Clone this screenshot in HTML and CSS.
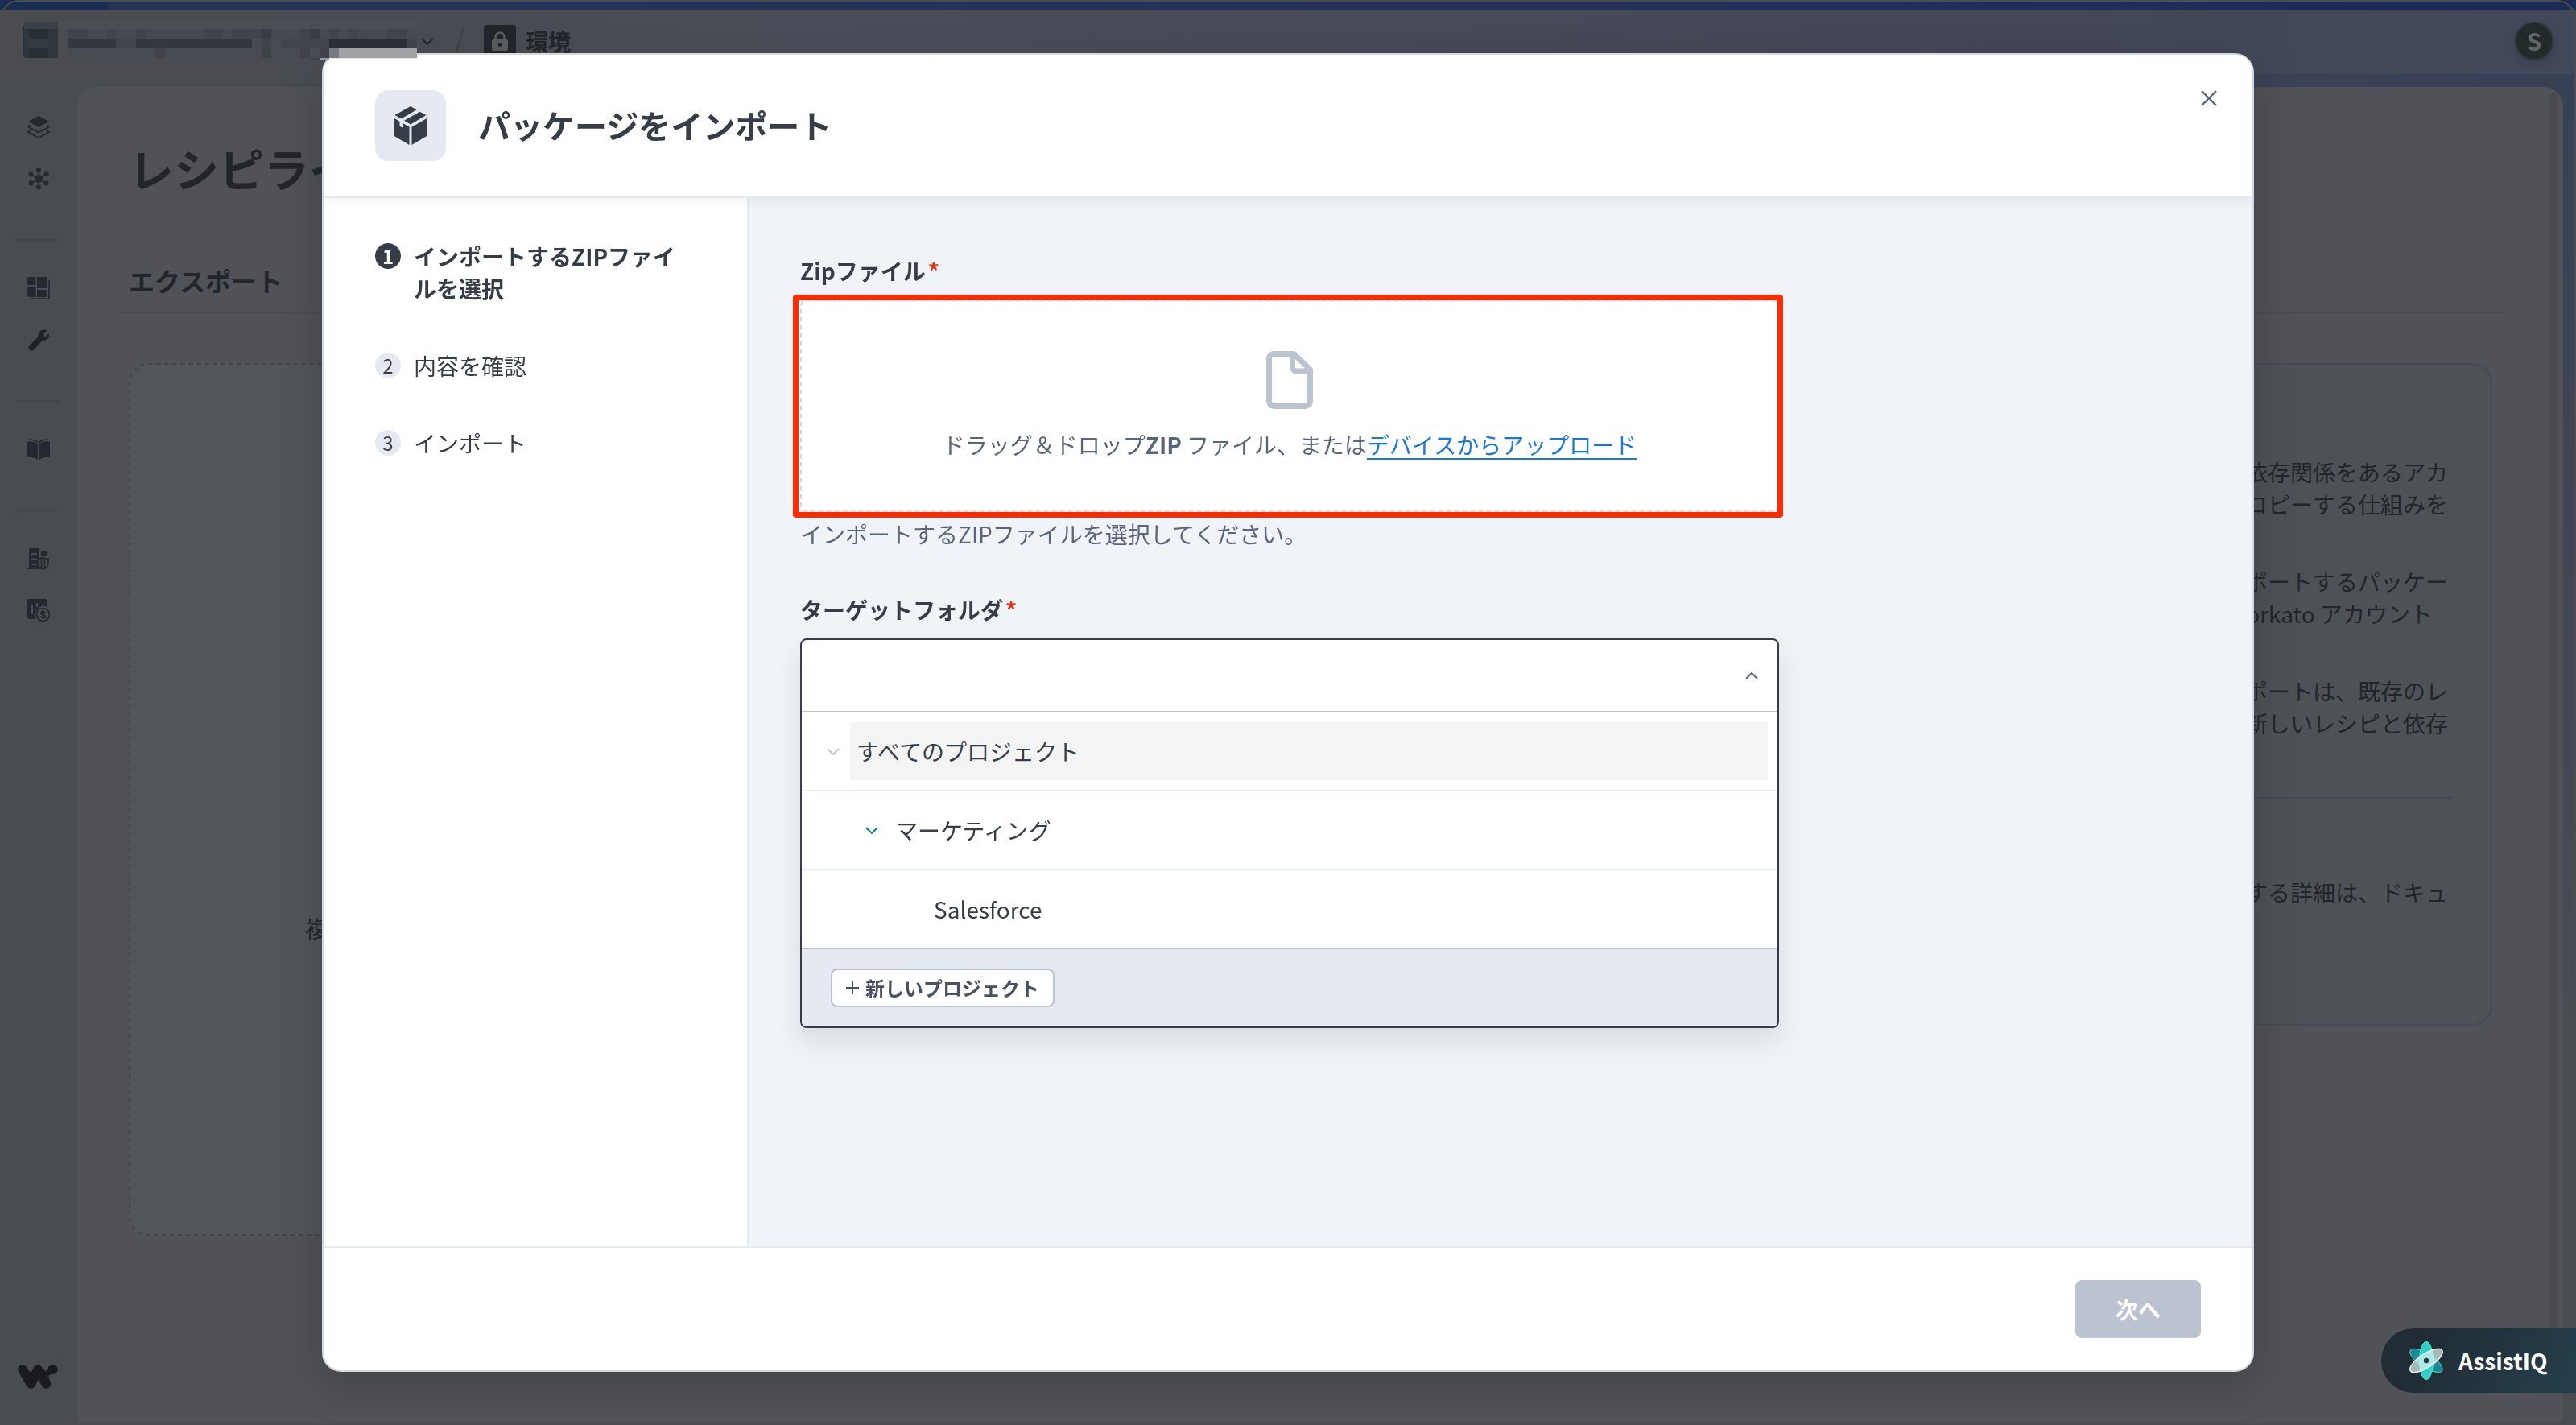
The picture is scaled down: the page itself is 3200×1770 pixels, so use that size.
FILE: index.html
```html
<!DOCTYPE html>
<html lang="ja">
<head>
  <meta charset="UTF-8" />
  <title>パッケージをインポート</title>
  <link rel="stylesheet" href="styles.css">
</head>
<body>

  <div class="app">
    <div class="top-strip"></div>

    <header class="topbar">
      <svg class="chevron-env" width="16" height="9" viewBox="0 0 16 9"><path d="M1 1l7 7 7-7"/></svg>
      <svg class="slash" width="12" height="36" viewBox="0 0 12 36"><path d="M11 1L1 35"/></svg>
      <span class="lock">
        <svg width="20" height="24" viewBox="0 0 20 24">
          <path d="M4.500 11V7a5.500 5.500 0 0 1 11 0v4" fill="none" stroke="#5b5e5f" stroke-width="2.500"/>
          <path fill-rule="evenodd" fill="#5b5e5f" d="M2 10h16a2 2 0 0 1 2 2v10a2 2 0 0 1-2 2H2a2 2 0 0 1-2-2V12a2 2 0 0 1 2-2zm8 4.500a2.300 2.300 0 1 0 0 4.600 2.300 2.300 0 0 0 0-4.600z"/>
        </svg>
      </span>
      <span class="env-name">環境</span>
      <span class="avatar">S</span>
    </header>

    <div class="workspace">
      <nav class="sidebar">
        <div class="nav-group">
          <span class="nav-item">
            <svg width="28" height="28" viewBox="0 0 28 28">
              <path class="fill" d="M14 0l13 7-13 7L1 7z"/>
              <path class="line" d="M3.500 11.500L1 13.500l13 7 13-7-2.500-2M3.500 18L1 20l13 7 13-7-2.500-2"/>
            </svg>
          </span>
          <span class="nav-item">
            <svg width="28" height="28" viewBox="0 0 28 28">
              <path class="line" d="M14 3v22M4.500 8.500l19 11M23.500 8.500l-19 11"/>
              <g class="fill">
                <circle cx="14" cy="14" r="5"/>
                <circle cx="14" cy="3.500" r="3"/><circle cx="14" cy="24.500" r="3"/>
                <circle cx="4.500" cy="8.500" r="3"/><circle cx="23.500" cy="8.500" r="3"/>
                <circle cx="4.500" cy="19.500" r="3"/><circle cx="23.500" cy="19.500" r="3"/>
              </g>
            </svg>
          </span>
        </div>
        <div class="nav-group">
          <span class="nav-item">
            <svg width="28" height="28" viewBox="0 0 28 28">
              <path class="fill" d="M2 0h8.500v10H0V2a2 2 0 0 1 2-2zM12 0h11a2 2 0 0 1 2 2v12H12zM0 12h10.500v13H2a2 2 0 0 1-2-2zM12 16h13v7a2 2 0 0 1-2 2H12z"/>
              <path class="line" d="M27 4v23H4"/>
            </svg>
          </span>
          <span class="nav-item">
            <svg width="28" height="28" viewBox="0 0 28 28">
              <path fill="#1e2126" d="M24.500 2.500l-4.600 4.600.8 2.400 2.400.4 3.800-3.900c1.200 5-2.600 9.700-8 8.500L9 25.500a3.800 3.800 0 0 1-6.700-3.800c.2-.5.500-.8 1-1.200L13.500 10.300C12.300 4.300 18.500-.9 24.500 2.500z"/>
            </svg>
          </span>
        </div>
        <div class="nav-group">
          <span class="nav-item">
            <svg width="28" height="28" viewBox="0 0 28 28">
              <path class="fill" d="M0 4.500c5-.8 9.500-.3 13 2.700V27c-4-2.800-8-3.600-13-3.300zM28 4.500c-5-.8-9.500-.3-13 2.700V27c4-2.800 8-3.600 13-3.300z"/>
              <path class="line" d="M2 2c4.500.1 8.500 1 12 3.800C17.500 3 21.500 2.100 26 2"/>
            </svg>
          </span>
        </div>
        <div class="nav-group">
          <span class="nav-item">
            <svg width="28" height="28" viewBox="0 0 28 28">
              <path class="fill" d="M4 1h9a2 2 0 0 1 2 2v8c-3 3-3 10 0 14v2H0v-2h2V3a2 2 0 0 1 2-2zM17 5h6a2 2 0 0 1 2 2v4l-5-1.500-3 1.500z"/>
              <path class="gap" d="M5 8h7M5 14.500h7M5 21h7"/>
              <path class="line" d="M19.500 12.500l6.500 2v5c0 4-3 6-6.500 7.500-3.500-1.500-6.500-3.500-6.500-7.500v-5zM17.500 13v12M21.500 13v12"/>
            </svg>
          </span>
          <span class="nav-item">
            <svg width="28" height="28" viewBox="0 0 28 28">
              <path class="fill" d="M2 0h21a2 2 0 0 1 2 2v7.500C16 6 8 14 10.500 25H2a2 2 0 0 1-2-2V2a2 2 0 0 1 2-2z"/>
              <path class="gap" d="M6 8v11M12 5v5M19 7v2"/>
              <circle class="line" cx="19.500" cy="19.500" r="8"/>
              <path class="line" d="M22.300 17c-.6-1.600-5.600-1.800-5.600.7 0 2.800 5.800 1.200 5.800 4 0 2.500-5.200 2.300-6-.2M19.500 13.800v11.400"/>
            </svg>
          </span>
        </div>
        <svg class="brand-mark" width="50" height="30" viewBox="0 0 50 30">
          <path d="M6 6l10.500 18L25 6l10.500 18L31 14l13-8" fill="none" stroke="#1a1b1e" stroke-width="11.500" stroke-linecap="round" stroke-linejoin="round"/>
          <path d="M14 8c3 2 4 1 6-2v12h-8zM30 6c3 3 5 4 8 1v6l-8 4z" fill="#1a1b1e"/>
          <path d="M13 0h7l-3.500 8.500zM31.500 0h6.500v5l-3 3.500-3-3.500zM38.500 13.500c3-2 5-2 11.500-1.500v3.500H38.500z" fill="#494c51"/>
        </svg>
      </nav>

      <main class="page">
        <h1 class="page-title">レシピライ</h1>
        <div class="tabs"><span class="tab">エクスポート</span></div>
        <div class="cards">
          <section class="export-card"><p class="export-text">複</p></section>
          <section class="info-card">
            <p>依存関係をあるアカ<br>コピーする仕組みを</p>
            <p>ポートするパッケー<br><span class="short-line">Workato アカウント</span></p>
            <p>ポートは、既存のレ<br>新しいレシピと依存</p>
            <p class="info-docs">する詳細は、ドキュ</p>
          </section>
        </div>
        <span class="scrollbar"></span>
      </main>
    </div>
  </div>

  <div class="overlay">
    <section class="modal">
      <header class="modal-header">
        <span class="modal-icon">
          <svg width="42" height="48" viewBox="0 0 42 48">
            <g fill="#373d47">
              <path d="M21 0l7.500 4.300L9.500 15.500 1.500 11z"/>
              <path d="M32.500 6.700L40.500 11 21 22.500l-8-4.700z"/>
              <path d="M0 14.500l7.500 4.300v6l3.500 1.700v-5.700l8.500 4.900V48L0 36.500z"/>
              <path d="M42 14.500v22L22.500 48V25.700z"/>
            </g>
          </svg>
        </span>
        <h2 class="modal-title">パッケージをインポート</h2>
        <svg class="close" width="20" height="20" viewBox="0 0 20 20"><path d="M1 1l18 18M19 1L1 19"/></svg>
      </header>

      <div class="modal-body">
        <ol class="steps">
          <li class="step active"><span class="step-no">1</span><span class="step-text">インポートするZIPファイルを選択</span></li>
          <li class="step"><span class="step-no">2</span><span class="step-text">内容を確認</span></li>
          <li class="step"><span class="step-no">3</span><span class="step-text">インポート</span></li>
        </ol>

        <div class="form">
          <label class="label">Zipファイル<span class="required">*</span></label>
          <div class="dropzone">
            <svg width="58" height="72" viewBox="0 0 58 72">
              <path d="M10 3.500h24L54.500 23v39.500a6 6 0 0 1-6 6H9.500a6 6 0 0 1-6-6v-53a6 6 0 0 1 6-6zM32.500 4v16a5 5 0 0 0 5 5h17"/>
            </svg>
            <p>ドラッグ＆ドロップ<b>ZIP</b> ファイル、または<a class="upload">デバイスからアップロード</a></p>
            <span class="highlight"></span>
          </div>
          <p class="help">インポートするZIPファイルを選択してください。</p>

          <label class="label">ターゲットフォルダ<span class="required">*</span></label>
          <div class="select">
            <div class="select-value">
              <svg width="16" height="9" viewBox="0 0 16 9"><path d="M1 8l7-7 7 7"/></svg>
            </div>
            <ul class="tree">
              <li class="tree-row level-0">
                <svg width="16" height="9" viewBox="0 0 16 9"><path d="M1 1l7 7 7-7"/></svg>
                <span class="tree-name">すべてのプロジェクト</span>
              </li>
              <li class="tree-row level-1">
                <svg width="16" height="9" viewBox="0 0 16 9"><path d="M1 1l7 7 7-7"/></svg>
                <span class="tree-name">マーケティング</span>
              </li>
              <li class="tree-row level-2"><span class="tree-name">Salesforce</span></li>
            </ul>
            <div class="select-footer">
              <button class="new-project">
                <svg width="16" height="16" viewBox="0 0 16 16"><path d="M8 0v16M0 8h16"/></svg>
                新しいプロジェクト
              </button>
            </div>
          </div>
        </div>
      </div>

      <footer class="modal-footer">
        <button class="next" disabled>次へ</button>
      </footer>
    </section>
  </div>

  <!-- obscured workspace name -->
  <svg class="workspace-name" width="490" height="48" viewBox="28 27 490 48">
    <rect x="28" y="31" width="8" height="40" rx="4" fill="#263038"/>
    <path fill="#3c4049" d="M30 27h42v9H30z"/>
    <path fill="#2f363d" d="M30 36h42v36H30z"/>
    <path fill="#272f36" d="M36 36h24v12H36zM36 60h24v12H36z"/>
    <path fill="#353b42" d="M36 48h24v12H36z"/>
    <path fill="#4b4e54" d="M72 27h446v9H72z"/>
    <path fill="#464951" d="M84 36h434v12H84z"/>
    <path fill="#41444b" d="M84 36h24v12H84zM133 36h12v12h-12zM169 36h12v12h-12zM253 36h24v12h-24zM289 36h36v12h-36zM373 36h24v12h-24zM409 36h12v12h-12zM433 36h12v12h-12zM481 36h24v12h-24z"/>
    <path fill="#3a3d43" d="M325 36h12v12h-12zM385 36h12v12h-12z"/>
    <path fill="#40444b" d="M84 48h434v12H84z"/>
    <path fill="#35373e" d="M84 48h60v12H84zM169 48h144v12H169z"/>
    <path fill="#464a52" d="M313 48h12v12h-12zM337 48h12v12h-12z"/>
    <path fill="#2b2e36" d="M409 48h96v12h-96z"/>
    <path fill="#474a50" d="M84 60h312v12H84z"/>
    <path fill="#404248" d="M193 60h12v12h-12zM325 60h12v12h-12zM373 60h12v12h-12zM397 60h12v14h-24v-2h12z"/>
    <path fill="#777a83" d="M409 60h12v12h-12z"/>
    <path fill="#a0a2a7" d="M421 60h97v12h-97z"/>
    <path fill="#e6e7ea" d="M409 72h109v1H409z"/>
    <path fill="#9a9ca2" d="M397 72h12v2h-12z"/>
  </svg>

  <div class="assist">
    <svg width="48" height="52" viewBox="-24 -26 48 52">
      <ellipse rx="8.500" ry="23.500" transform="rotate(-57)" fill="#1b8a95" stroke="#3fd0c9"/>
      <ellipse rx="8.500" ry="23.500" fill="#2fcfc6" stroke="#5fe8da"/>
      <ellipse rx="8.500" ry="23.500" transform="rotate(57)" fill="#dff5f2" fill-opacity=".7" stroke="#e4f3f2" stroke-width="1.500"/>
      <circle r="3.200" fill="#24363f"/>
    </svg>
    <span>AssistIQ</span>
  </div>

</body>
</html>
```
FILE: styles.css
```css
* {
  box-sizing: border-box;
}

body {
  margin: 0;
  height: 1770px;
  overflow: hidden;
  font-family: 'Noto Sans CJK JP', sans-serif;
  font-size: 28px;
  line-height: 40px;
  color: #373d47;
}

h1, h2, p, ol, ul {
  margin: 0;
  padding: 0;
  list-style: none;
}

button {
  font-family: inherit;
}

svg {
  display: block;
  flex: none;
}

/* page behind the dialog */
.app {
  position: relative;
  display: flex;
  flex-direction: column;
  height: 1770px;
  background: radial-gradient(ellipse 2600px 1200px at 100% 92px, #384056, #494c51);
  color: #22252a;
}

/* window edge */
.app::after {
  content: '';
  position: absolute;
  inset: 0;
  border: 2px solid #4a4c50;
  border-radius: 24px;
}

.top-strip {
  height: 12px;
  background: linear-gradient(75deg, #1c2d55 131px, #253354 132px, #24325a 60%, #1b2c54 92%);
}

.topbar {
  display: flex;
  align-items: center;
  height: 80px;
  padding: 0 28px 2px 523px;
  background: linear-gradient(90deg, #4a4c50, #4a4c57 32%, #434756 80%, #404859);
}

.chevron-env path {
  fill: none;
  stroke: #22252a;
  stroke-width: 2;
}

.slash {
  margin: 0 24px 0 26px;
}

.slash path {
  stroke: #3c4047;
  stroke-width: 2;
}

.lock {
  display: flex;
  align-items: center;
  justify-content: center;
  width: 40px;
  height: 40px;
  border-radius: 4px;
  background: #22252a;
}

.env-name {
  margin-left: 12px;
  font-weight: 700;
}

.avatar {
  width: 48px;
  height: 48px;
  margin-left: auto;
  border: 2px solid #2c3837;
  border-radius: 50%;
  background: #222b29;
  box-shadow: 0 4px 10px rgba(0, 0, 0, 0.15);
  color: #60656a;
  font-size: 30px;
  font-weight: 700;
  line-height: 43px;
  text-align: center;
}

.workspace {
  display: flex;
  flex: 1;
  padding-bottom: 2px;
  padding-right: 16px;
}

.sidebar {
  display: flex;
  flex-direction: column;
  width: 96px;
  padding-top: 34px;
  padding-bottom: 43px;
  background: #494c51;
}

.nav-group + .nav-group {
  padding-top: 72px;
  background: linear-gradient(#42454a, #42454a) 20px 43px / 54px 2px no-repeat;
}

.nav-item {
  display: flex;
  align-items: center;
  justify-content: center;
  height: 64px;
}

.fill {
  fill: #25292f;
}

.line {
  fill: none;
  stroke: #25292f;
  stroke-width: 1.7;
}

.gap {
  fill: none;
  stroke: #494c51;
  stroke-width: 2;
}

.brand-mark {
  margin: auto 0 0 22px;
}

.page {
  position: relative;
  flex: 1;
  margin-top: 16px;
  padding: 60px 72px 0 48px;
  border-radius: 24px 24px 10px 0;
  background: #505257;
}

.page-title {
  padding-left: 16px;
  font-size: 56px;
  line-height: 80px;
  white-space: nowrap;
}

.tabs {
  height: 141px;
  padding: 80px 0 0 16px;
  border-bottom: 2px solid #484b50;
}

.tab {
  font-size: 32px;
  font-weight: 700;
}

.cards {
  display: grid;
  grid-template-columns: 1420px 1420px;
  justify-content: space-between;
  align-items: start;
  padding: 62px 16px 0;
}

.export-card {
  height: 1084px;
  padding: 680px 0 0 217px;
  border: 2px dashed #424649;
  border-radius: 24px;
  background: #525658;
}

.info-card {
  height: 823px;
  padding: 113px 53px 0 0;
  border: 2px solid #404b58;
  border-radius: 24px;
  background: #4e5256;
  text-align: right;
}

.info-card p {
  margin-bottom: 56px;
}

.short-line {
  margin-right: 19px;
}

.info-card .info-docs {
  margin: 72px -5px 0 0;
  padding: 96px 5px 0 0;
  border-top: 2px solid #404b58;
}

.scrollbar {
  position: absolute;
  top: 6px;
  right: 6px;
  width: 12px;
  height: 1570px;
  border-radius: 6px;
  background: #494b50;
}

/* dialog */
.overlay {
  position: fixed;
  inset: 0;
  display: flex;
  justify-content: center;
  padding: 66px 0;
}

.modal {
  display: flex;
  flex-direction: column;
  width: 2400px;
  height: 1638px;
  border: 2px solid #d3dae6;
  border-radius: 24px;
  overflow: hidden;
  background: #fff;
  box-shadow: 0 16px 48px rgba(40, 44, 40, 0.35);
}

.modal-header {
  position: relative;
  display: flex;
  height: 178px;
  padding: 44px 44px 0 64px;
  border-bottom: 2px solid #e4e9f2;
  box-shadow: 0 4px 14px rgba(0, 0, 0, 0.06);
}

.modal-icon {
  display: flex;
  align-items: center;
  justify-content: center;
  width: 88px;
  height: 88px;
  border-radius: 16px;
  background: #e4e9f2;
}

.modal-title {
  margin-left: 40px;
  font-size: 40px;
  line-height: 86px;
}

.close {
  margin-left: auto;
}

.close path {
  stroke: #5a6678;
  stroke-width: 2.4;
}

.modal-body {
  display: flex;
  height: 1302px;
}

.steps {
  width: 528px;
  padding: 52px 64px 0;
  border-right: 2px solid #e4e9f2;
}

.step {
  display: flex;
  gap: 16px;
  margin-bottom: 56px;
}

.step-text {
  width: 336px;
  margin-right: -20px;
}

.step-no {
  flex: none;
  width: 32px;
  height: 32px;
  margin-top: 4px;
  border-radius: 50%;
  background: #e4e9f2;
  font-size: 24px;
  line-height: 31px;
  text-align: center;
}

.active {
  font-weight: 700;
}

.active .step-no {
  background: #373d47;
  color: #fff;
}

.form {
  flex: 1;
  padding: 70px 64px 0;
  background: #f0f3f8;
}

.label {
  display: block;
  font-weight: 700;
}

.required {
  margin-left: 3px;
  color: #de3618;
}

.dropzone {
  position: relative;
  display: flex;
  flex-direction: column;
  align-items: center;
  width: 1216px;
  height: 264px;
  margin-top: 16px;
  padding-top: 62px;
  border: 2px dashed #d3dae6;
  border-radius: 8px;
  background: #fff;
  color: #5a6678;
}

.dropzone path {
  fill: none;
  stroke: #bcc3d0;
  stroke-width: 7;
  stroke-linejoin: round;
}

.dropzone p {
  margin-top: 24px;
}

.upload {
  display: inline-block;
  border-bottom: 2px solid #1c77dd;
  color: #1c77dd;
  line-height: 33px;
}

.highlight {
  position: absolute;
  top: -8px;
  left: -11px;
  width: 1230px;
  height: 277px;
  border: 7px solid #ff2a00;
  border-radius: 4px;
}

.help {
  margin: 7px 0 54px;
  color: #5a6678;
}

.select {
  width: 1216px;
  height: 484px;
  margin-top: 16px;
  border: 2px solid #373d47;
  border-radius: 8px;
  overflow: hidden;
  background: #fff;
  box-shadow: 0 16px 32px rgba(55, 61, 71, 0.13);
}

.select-value {
  display: flex;
  align-items: center;
  justify-content: flex-end;
  height: 90px;
  padding-right: 24px;
  border-bottom: 2px solid #bcc3d0;
}

.select-value path {
  fill: none;
  stroke: #5a6678;
  stroke-width: 2;
}

.tree-row {
  display: flex;
  align-items: center;
  height: 98px;
  padding-right: 12px;
  border-bottom: 2px solid #e4e9f2;
}

.tree-row:last-child {
  border-color: #bcc3d0;
}

.tree-row path {
  fill: none;
  stroke: #bcc3d0;
  stroke-width: 2;
}

.tree-name {
  flex: 1;
  margin-left: 13px;
  padding: 16px 8px;
}

.level-0 {
  padding-left: 31px;
}

.level-0 .tree-name {
  background: #f4f4f4;
}

.level-1 {
  padding-left: 79px;
}

.level-1 path {
  stroke: #0a7f8a;
}

.level-2 {
  padding-left: 143px;
}

.select-footer {
  height: 98px;
  padding: 24px 36px;
  background: #e4e9f2;
}

.new-project {
  display: flex;
  align-items: center;
  gap: 8px;
  width: 278px;
  height: 48px;
  padding: 0 0 1px 17px;
  border: 2px solid #bcc3d0;
  border-radius: 8px;
  background: #fff;
  color: #475161;
  font-size: 24px;
  font-weight: 700;
  white-space: nowrap;
}

.new-project path {
  stroke: #475161;
  stroke-width: 2;
}

.modal-footer {
  display: flex;
  justify-content: flex-end;
  flex: 1;
  padding: 40px 64px;
  border-top: 2px solid #e4e9f2;
}

.next {
  width: 156px;
  height: 72px;
  padding: 0;
  border: none;
  border-radius: 8px;
  background: #bcc3d0;
  color: #fff;
  font-size: 28px;
  font-weight: 700;
}

.workspace-name {
  position: absolute;
  top: 27px;
  left: 28px;
}

.assist {
  position: fixed;
  right: 0;
  bottom: 40px;
  display: flex;
  align-items: center;
  gap: 16px;
  width: 242px;
  height: 80px;
  padding-left: 32px;
  border-radius: 40px 0 0 40px;
  background: linear-gradient(120deg, #212c34 20%, #253f4c);
  color: #fff;
  font-weight: 700;
}
```
